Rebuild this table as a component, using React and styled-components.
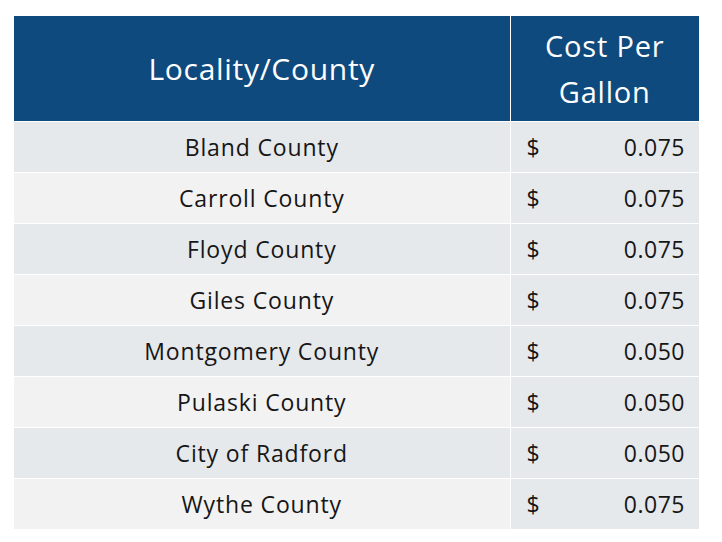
import React from "react";
import styled, { createGlobalStyle } from "styled-components";

const Global = createGlobalStyle`
  html, body { margin: 0; padding: 0; background: #ffffff; }
  body { font-family: "Open Sans", "Liberation Sans", sans-serif; }
`;

const Page = styled.div`
  padding: 16px 23px 0 14px;
  width: 722px;
  box-sizing: border-box;
`;

const Table = styled.table`
  border-collapse: collapse;
  width: 685px;
  table-layout: fixed;
`;

const HeadCell = styled.th`
  background: #0e4a7e;
  color: #ffffff;
  font-weight: 400;
  font-size: ${(p) => p.$size}px;
  line-height: 46px;
  letter-spacing: ${(p) => p.$spacing}px;
  height: 105px;
  padding: 0;
  text-align: center;
  vertical-align: middle;
  border-left: ${(p) => (p.$divider ? "1px solid #ffffff" : "none")};
`;

const NameCell = styled.td`
  background: ${(p) => (p.$alt ? "#f2f2f2" : "#e6e9ec")};
  color: #161616;
  font-size: 23px;
  letter-spacing: 0.85px;
  text-align: center;
  height: 50px;
  padding: 0;
  border-top: 1px solid #ffffff;
`;

const CostCell = styled.td`
  background: #e6e9ec;
  color: #161616;
  font-size: 23px;
  letter-spacing: 0.5px;
  height: 50px;
  padding: 0 14px 0 16px;
  border-top: 1px solid #ffffff;
  border-left: 1px solid #ffffff;
`;

const CostInner = styled.div`
  display: flex;
  justify-content: space-between;
  align-items: center;
`;

const rows = [
  ["Bland County", "0.075"],
  ["Carroll County", "0.075"],
  ["Floyd County", "0.075"],
  ["Giles County", "0.075"],
  ["Montgomery County", "0.050"],
  ["Pulaski County", "0.050"],
  ["City of Radford", "0.050"],
  ["Wythe County", "0.075"],
];

export default function App() {
  return (
    <Page>
      <Global />
      <Table>
        <colgroup>
          <col style={{ width: 496 }} />
          <col style={{ width: 189 }} />
        </colgroup>
        <thead>
          <tr>
            <HeadCell $size={30} $spacing={0.7}>Locality/County</HeadCell>
            <HeadCell $size={29} $spacing={0.8} $divider>
              Cost Per
              <br />
              Gallon
            </HeadCell>
          </tr>
        </thead>
        <tbody>
          {rows.map(([name, cost], i) => (
            <tr key={name}>
              <NameCell $alt={i % 2 === 1}>{name}</NameCell>
              <CostCell>
                <CostInner>
                  <span>$</span>
                  <span>{cost}</span>
                </CostInner>
              </CostCell>
            </tr>
          ))}
        </tbody>
      </Table>
    </Page>
  );
}
